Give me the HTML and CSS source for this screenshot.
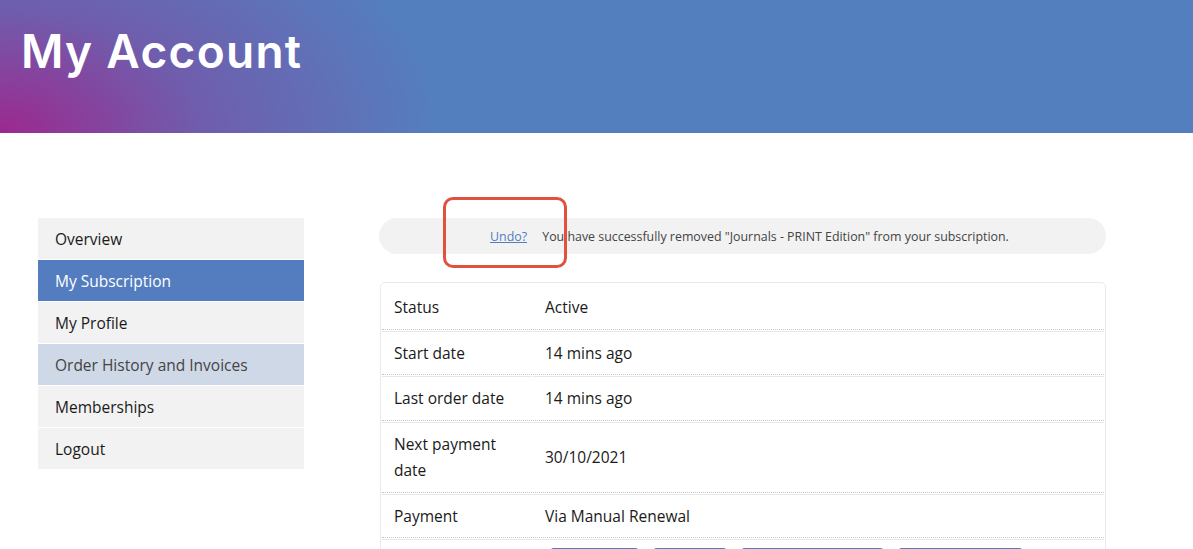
FILE: index.html
```html
<!DOCTYPE html>
<html>
<head>
<meta charset="utf-8">
<link rel="stylesheet" href="styles.css">
</head>
<body>
<header class="banner">
  <h1 class="title">My Account</h1>
</header>
<div class="page">
  <nav class="sidenav">
    <a class="nav-item">Overview</a>
    <a class="nav-item active">My Subscription</a>
    <a class="nav-item">My Profile</a>
    <a class="nav-item hover">Order History and Invoices</a>
    <a class="nav-item">Memberships</a>
    <a class="nav-item">Logout</a>
  </nav>
  <main class="content">
    <div class="notice">
      <a class="undo" href="#">Undo?</a>
      <span class="msg">You have successfully removed "Journals - PRINT Edition" from your subscription.</span>
      <span class="highlight"></span>
    </div>
    <div class="card">
      <table class="details">
        <tr class="first"><td class="label">Status</td><td>Active</td></tr>
        <tr><td class="label">Start date</td><td>14 mins ago</td></tr>
        <tr><td class="label">Last order date</td><td>14 mins ago</td></tr>
        <tr><td class="label">Next payment date</td><td>30/10/2021</td></tr>
        <tr><td class="label">Payment</td><td>Via Manual Renewal</td></tr>
        <tr><td class="label">Actions</td><td class="actions">
          <a class="btn b1">Renew now</a><a class="btn b2">Cancel</a><a class="btn b3">Change address</a><a class="btn b4">Add products</a>
        </td></tr>
      </table>
    </div>
  </main>
</div>
</body>
</html>
```
FILE: styles.css
```css
html, body {
  margin: 0;
  padding: 0;
  background: #fff;
}
body {
  font-family: "Open Sans", "Noto Sans", sans-serif;
  color: #222;
}
.banner {
  height: 133px;
  background:
    radial-gradient(ellipse 440px 270px at 0% 100%, rgba(160, 36, 140, 0.95) 0%, rgba(130, 70, 160, 0.6) 45%, rgba(84, 127, 191, 0) 100%),
    #547fbf;
  box-sizing: border-box;
  padding: 23px 0 0 21px;
}
.title {
  margin: 0;
  font-family: "Inter", "Open Sans", sans-serif;
  font-weight: 600;
  font-size: 46px;
  line-height: 56px;
  color: #fff;
  letter-spacing: 1.3px;
}
.page {
  display: flex;
  align-items: flex-start;
  padding: 85px 0 0 38px;
  gap: 75px;
}
.sidenav {
  width: 266px;
  display: flex;
  flex-direction: column;
  gap: 1px;
  flex-shrink: 0;
}
.nav-item {
  display: block;
  height: 40px;
  line-height: 41px;
  padding-top: 1px;
  padding-left: 17px;
  background: #f2f2f2;
  font-size: 15.5px;
  color: #1a1a1a;
}
.nav-item.active {
  background: #537dbf;
  color: #fff;
}
.nav-item.hover {
  background: #cfd8e6;
  color: #444;
}
.content {
  width: 727px;
}
.notice {
  position: relative;
  height: 36px;
  line-height: 37px;
  background: #f2f2f2;
  border-radius: 18px;
  font-size: 12.4px;
  color: #444;
  padding-left: 111px;
}
.undo {
  color: #537dbf;
  text-decoration: underline;
  margin-right: 12px;
}
.highlight {
  position: absolute;
  left: 64px;
  top: -21px;
  width: 118px;
  height: 65px;
  border: 3px solid #e0513e;
  border-radius: 10px;
}
.card {
  margin-top: 28px;
  margin-left: 1px;
  width: 726px;
  padding: 1px 0;
  border: 1px solid #eaeaea;
  border-radius: 5px;
  box-sizing: border-box;
}
.details {
  width: 100%;
  border-collapse: separate;
  border-spacing: 1px 1px;
  font-size: 15.5px;
}
.details td {
  padding: 8px 12px;
  line-height: 26.5px;
  border-top: 1px solid #e8e8e8;
  border-bottom: 1px dotted #c8c8c8;
  vertical-align: middle;
  color: #1a1a1a;
}
.details tr.first td {
  border-top-color: transparent;
}
.details td.label {
  width: 126px;
}
.actions {
  display: flex;
  gap: 14px;
  padding-left: 17px !important;
}
.btn {
  display: inline-block;
  height: 34px;
  line-height: 34px;
  background: #537dbf;
  color: #fff;
  border-radius: 4px;
  padding: 0 14px;
  font-size: 14px;
  white-space: nowrap;
  overflow: hidden;
}
.b1 { width: 61px; }
.b2 { width: 46px; }
.b3 { width: 115px; }
.b4 { width: 97px; }
```
